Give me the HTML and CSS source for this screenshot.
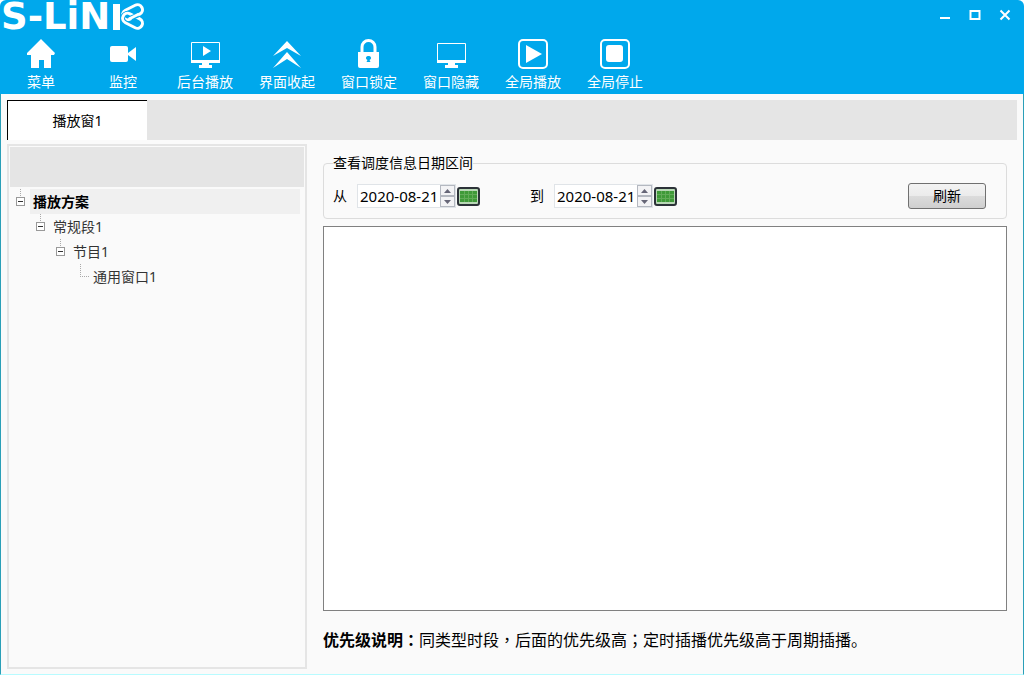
FILE: index.html
```
<!DOCTYPE html>
<html lang="zh-CN">
<head>
<meta charset="utf-8">
<meta name="viewport" content="width=device-width, initial-scale=1">
<title>S-LiNK</title>
<link rel="stylesheet" href="styles.css">
</head>
<body>
<div class="window">
  <header class="header">
    <div class="titlebar">
      <div class="logo">
        <span>S-LiN</span>
        <svg width="32" height="28" viewBox="0 0 32 28" role="img" aria-label="K">
          <path d="M0 1h7v26H0z" fill="#fff"/>
          <g fill="none">
            <rect x="9" y="4" width="21" height="10" rx="5" transform="rotate(-27 20 9)" stroke="#00a8ec" stroke-width="5"/>
            <rect x="9" y="4" width="21" height="10" rx="5" transform="rotate(-27 20 9)" stroke="#fff" stroke-width="3"/>
            <rect x="9" y="13" width="21" height="10" rx="5" transform="rotate(27 20 18)" stroke="#00a8ec" stroke-width="5"/>
            <rect x="9" y="13" width="21" height="10" rx="5" transform="rotate(27 20 18)" stroke="#fff" stroke-width="3"/>
            <path d="m18 15 7-3" stroke="#00a8ec" stroke-width="5"/>
            <path d="m16 16 10-5" stroke="#fff" stroke-width="3"/>
          </g>
        </svg>
      </div>
      <div class="controls">
        <button type="button" aria-label="最小化"><svg width="12" height="12" viewBox="0 0 12 12"><path d="M1 9h10" stroke="#fff" stroke-width="2"/></svg></button>
        <button type="button" aria-label="最大化"><svg width="12" height="12" viewBox="0 0 12 12"><path d="M1.500 2h9v8h-9z" fill="none" stroke="#fff" stroke-width="2"/></svg></button>
        <button type="button" aria-label="关闭"><svg width="12" height="12" viewBox="0 0 12 12"><path d="m1.500 1.500 9 9M10.500 1.500l-9 9" stroke="#fff" stroke-width="2"/></svg></button>
      </div>
    </div>
    <nav class="toolbar">
      <button type="button"><svg width="32" height="32" viewBox="0 0 32 32"><path d="M16 1 30 15l-1 2h-3v13h-7v-8h-5v8H6V17H2l0-2z" fill="#fff"/></svg>菜单</button>
      <button type="button"><svg width="32" height="32" viewBox="0 0 32 32"><rect x="3" y="8" width="18" height="16" rx="2" fill="#fff"/><path d="m21 15 8-6v14l-8-6z" fill="#fff"/></svg>监控</button>
      <button type="button"><svg width="32" height="32" viewBox="0 0 32 32"><path d="M2.500 4.500h28v18h-28z" fill="none" stroke="#fff"/><path d="M2 22h29v3H2zM13 25h7v2h3v3H10v-3h3zM14 8l8 5-8 5z" fill="#fff"/></svg>后台播放</button>
      <button type="button"><svg width="32" height="32" viewBox="0 0 32 32"><path d="m16 3 14 15-14-8-14 8zM16 14l14 16-14-9-14 9z" fill="#fff"/></svg>界面收起</button>
      <button type="button"><svg width="32" height="32" viewBox="0 0 32 32"><path d="M9 15V9a6.500 6.500 0 0 1 13 0v6" fill="none" stroke="#fff" stroke-width="3"/><path d="M5 14h21v14q0 2-2 2H7q-2 0-2-2z" fill="#fff"/><path d="M15.500 18a2 2 0 0 1 1 4l1 2h-4l1-2a2 2 0 0 1 1-4z" fill="#00a8ec"/></svg>窗口锁定</button>
      <button type="button"><svg width="32" height="32" viewBox="0 0 32 32"><path d="M2.500 5.500h28v18h-28z" fill="none" stroke="#fff"/><path d="M2 22h29v3H2zM13 25h7v2h3v3H10v-3h3z" fill="#fff"/></svg>窗口隐藏</button>
      <button type="button"><svg width="32" height="32" viewBox="0 0 32 32"><rect x="2" y="2" width="28" height="28" rx="4" fill="none" stroke="#fff" stroke-width="2"/><path d="m9 7 16 9-16 9z" fill="#fff"/></svg>全局播放</button>
      <button type="button"><svg width="32" height="32" viewBox="0 0 32 32"><rect x="2" y="2" width="28" height="28" rx="4" fill="none" stroke="#fff" stroke-width="2"/><rect x="7" y="7" width="17" height="17" rx="3" fill="#fff"/></svg>全局停止</button>
    </nav>
  </header>
  <main class="main">
    <div class="tabs" role="tablist">
      <button type="button" class="tab" role="tab" aria-selected="true">播放窗1</button>
    </div>
    <div class="content">
      <aside class="sidebar">
        <div class="sidebar-head"></div>
        <ul class="tree">
          <li>
            <div class="node selected"><button type="button" class="toggle" aria-label="折叠"></button><span class="label">播放方案</span></div>
            <ul>
              <li>
                <div class="node"><button type="button" class="toggle" aria-label="折叠"></button><span class="label">常规段1</span></div>
                <ul>
                  <li>
                    <div class="node"><button type="button" class="toggle" aria-label="折叠"></button><span class="label">节目1</span></div>
                    <ul>
                      <li><div class="node"><span class="elbow"></span><span class="label">通用窗口1</span></div></li>
                    </ul>
                  </li>
                </ul>
              </li>
            </ul>
          </li>
        </ul>
      </aside>
      <section class="detail">
        <fieldset class="range">
          <legend>查看调度信息日期区间</legend>
          <div class="range-row">
            <div class="field">
              <label for="from">从</label>
              <div class="date">
                <input id="from" type="text" value="2020-08-21">
                <div class="spin">
                  <button type="button" aria-label="增加"><svg width="7" height="4" viewBox="0 0 7 4"><path d="M0 4h7L3.500 0z" fill="#667"/></svg></button>
                  <button type="button" aria-label="减少"><svg width="7" height="4" viewBox="0 0 7 4"><path d="M0 0h7L3.500 4z" fill="#667"/></svg></button>
                </div>
              </div>
              <button type="button" class="calendar" aria-label="选择开始日期"><svg width="17" height="11" viewBox="0 0 17 11"><path d="M0 0h17v11H0z" fill="#3f9a38"/><path d="M0 3.500h17M0 7.500h17M4.500 0v11M8.500 0v11M12.500 0v11" stroke="#62ab58"/></svg></button>
            </div>
            <div class="field">
              <label for="to">到</label>
              <div class="date">
                <input id="to" type="text" value="2020-08-21">
                <div class="spin">
                  <button type="button" aria-label="增加"><svg width="7" height="4" viewBox="0 0 7 4"><path d="M0 4h7L3.500 0z" fill="#667"/></svg></button>
                  <button type="button" aria-label="减少"><svg width="7" height="4" viewBox="0 0 7 4"><path d="M0 0h7L3.500 4z" fill="#667"/></svg></button>
                </div>
              </div>
              <button type="button" class="calendar" aria-label="选择结束日期"><svg width="17" height="11" viewBox="0 0 17 11"><path d="M0 0h17v11H0z" fill="#3f9a38"/><path d="M0 3.500h17M0 7.500h17M4.500 0v11M8.500 0v11M12.500 0v11" stroke="#62ab58"/></svg></button>
            </div>
            <button type="button" class="refresh">刷新</button>
          </div>
        </fieldset>
        <div class="list"></div>
        <p class="note"><strong>优先级说明<span class="mark" lang="zh-TW">：</span></strong>同类型时段<span class="mark" lang="zh-TW">，</span>后面的优先级高<span class="mark" lang="zh-TW">；</span>定时插播优先级高于周期插播。</p>
      </section>
    </div>
  </main>
</div>
</body>
</html>
```
FILE: styles.css
```
* {
  box-sizing: border-box;
}

body {
  margin: 0;
  font: 14px/20px "Noto Sans", "Noto Sans CJK SC", sans-serif;
  color: #000;
}

button {
  margin: 0;
  padding: 0;
  border: 0;
  background: none;
  font: inherit;
  color: inherit;
}

svg {
  display: block;
}

.window {
  display: flex;
  flex-direction: column;
  min-height: 100vh;
  border-radius: 6px 6px 0 0;
  background: #fafafa;
}

.header {
  border-radius: 6px 6px 0 0;
  background: #00a8ec;
  color: #fff;
}

.titlebar {
  display: flex;
  justify-content: space-between;
  height: 34px;
}

.logo {
  display: flex;
  align-items: center;
  gap: 3px;
  padding-left: 1px;
  font: bold 37px/32px "DejaVu Sans", sans-serif;
}

.controls {
  display: flex;
  align-items: center;
  gap: 18px;
  height: 30px;
  padding-right: 13px;
}

.toolbar {
  display: flex;
  height: 60px;
}

.toolbar button {
  display: flex;
  flex-direction: column;
  align-items: center;
  gap: 2px;
  width: 82px;
  padding-top: 4px;
}

.main {
  flex: 1;
  display: flex;
  flex-direction: column;
  gap: 4px;
  padding: 6px 6px 5px;
  border: solid #2a9fb8;
  border-width: 0 1px;
  border-bottom: 1px solid #b8fbff;
}

.tabs {
  display: flex;
  background: #e5e5e5;
}

.tab {
  width: 140px;
  height: 40px;
  border: solid #000;
  border-width: 1px 0 0 1px;
  background: #fff;
}

.content {
  flex: 1;
  display: flex;
  gap: 16px;
}

.sidebar {
  width: 300px;
  border: 2px solid #e5e5e5;
  padding: 1px;
}

.sidebar-head {
  height: 40px;
  background: #e5e5e5;
}

.tree,
.tree ul {
  margin: 0;
  padding: 0;
  list-style: none;
}

.tree {
  padding: 2px 4px 0 6px;
  color: #333;
}

.tree ul {
  padding-left: 20px;
}

.node {
  display: flex;
  align-items: center;
  height: 25px;
}

.toggle {
  width: 9px;
  height: 9px;
  border: 1px solid #999;
  background: linear-gradient(#333, #333) center / 5px 1px no-repeat #fff;
}

.node:has(.toggle) {
  background: repeating-linear-gradient(#aaa 0 1px, transparent 1px 2px) 4px 0 / 1px 8px no-repeat;
}

.label {
  flex: 1;
  margin-left: 5px;
  padding-left: 3px;
  line-height: 25px;
}

.selected .label {
  background: #f0f0f0;
  color: #000;
  font-weight: bold;
}

.elbow {
  align-self: flex-start;
  width: 9px;
  height: 13px;
  margin-left: 4px;
  margin-right: -4px;
  border: dotted #aaa;
  border-width: 0 0 1px 1px;
}

.detail {
  flex: 1;
  display: flex;
  flex-direction: column;
  padding: 9px 10px 0 0;
}

.range {
  margin: 0;
  padding: 0 20px 9px 9px;
  border: 1px solid #dcdcdc;
  border-radius: 4px;
}

.range legend {
  padding: 0;
}

.range-row {
  display: flex;
  align-items: center;
  gap: 50px;
  padding-top: 10px;
}

.field {
  display: flex;
  align-items: center;
}

.field label {
  margin-right: 10px;
}

.date {
  display: flex;
  align-items: center;
  width: 99px;
  height: 24px;
  border: 1px solid #e0e4e8;
  background: #fff;
}

.date input {
  flex: 1;
  min-width: 0;
  padding: 0 0 0 2px;
  border: 0;
  background: none;
  font: 15px/20px "Noto Sans", sans-serif;
}

.spin {
  display: grid;
  width: 15px;
  height: 22px;
}

.spin button {
  display: grid;
  place-items: center;
  border: 1px solid #b4b8c0;
  background: #f3f3f5;
}

.calendar {
  display: grid;
  place-items: center;
  width: 23px;
  height: 19px;
  margin-left: 1px;
  border: 2px solid #2c3238;
  border-radius: 3px;
  background: #b9d8b6;
}

.refresh {
  width: 78px;
  height: 26px;
  margin-left: auto;
  border: 1px solid #707070;
  border-radius: 3px;
  background: linear-gradient(#f3f3f3, #ebebeb 50%, #dcdcdc 50%, #cfcfcf);
}

.list {
  flex: 1;
  margin-top: 7px;
  border: 1px solid #808080;
  background: #fff;
}

.note {
  margin: 0;
  padding: 16px 0 17px;
  font-size: 16px;
  line-height: 24px;
}

.mark {
  font-family: "Noto Sans CJK TC", sans-serif;
}
```
